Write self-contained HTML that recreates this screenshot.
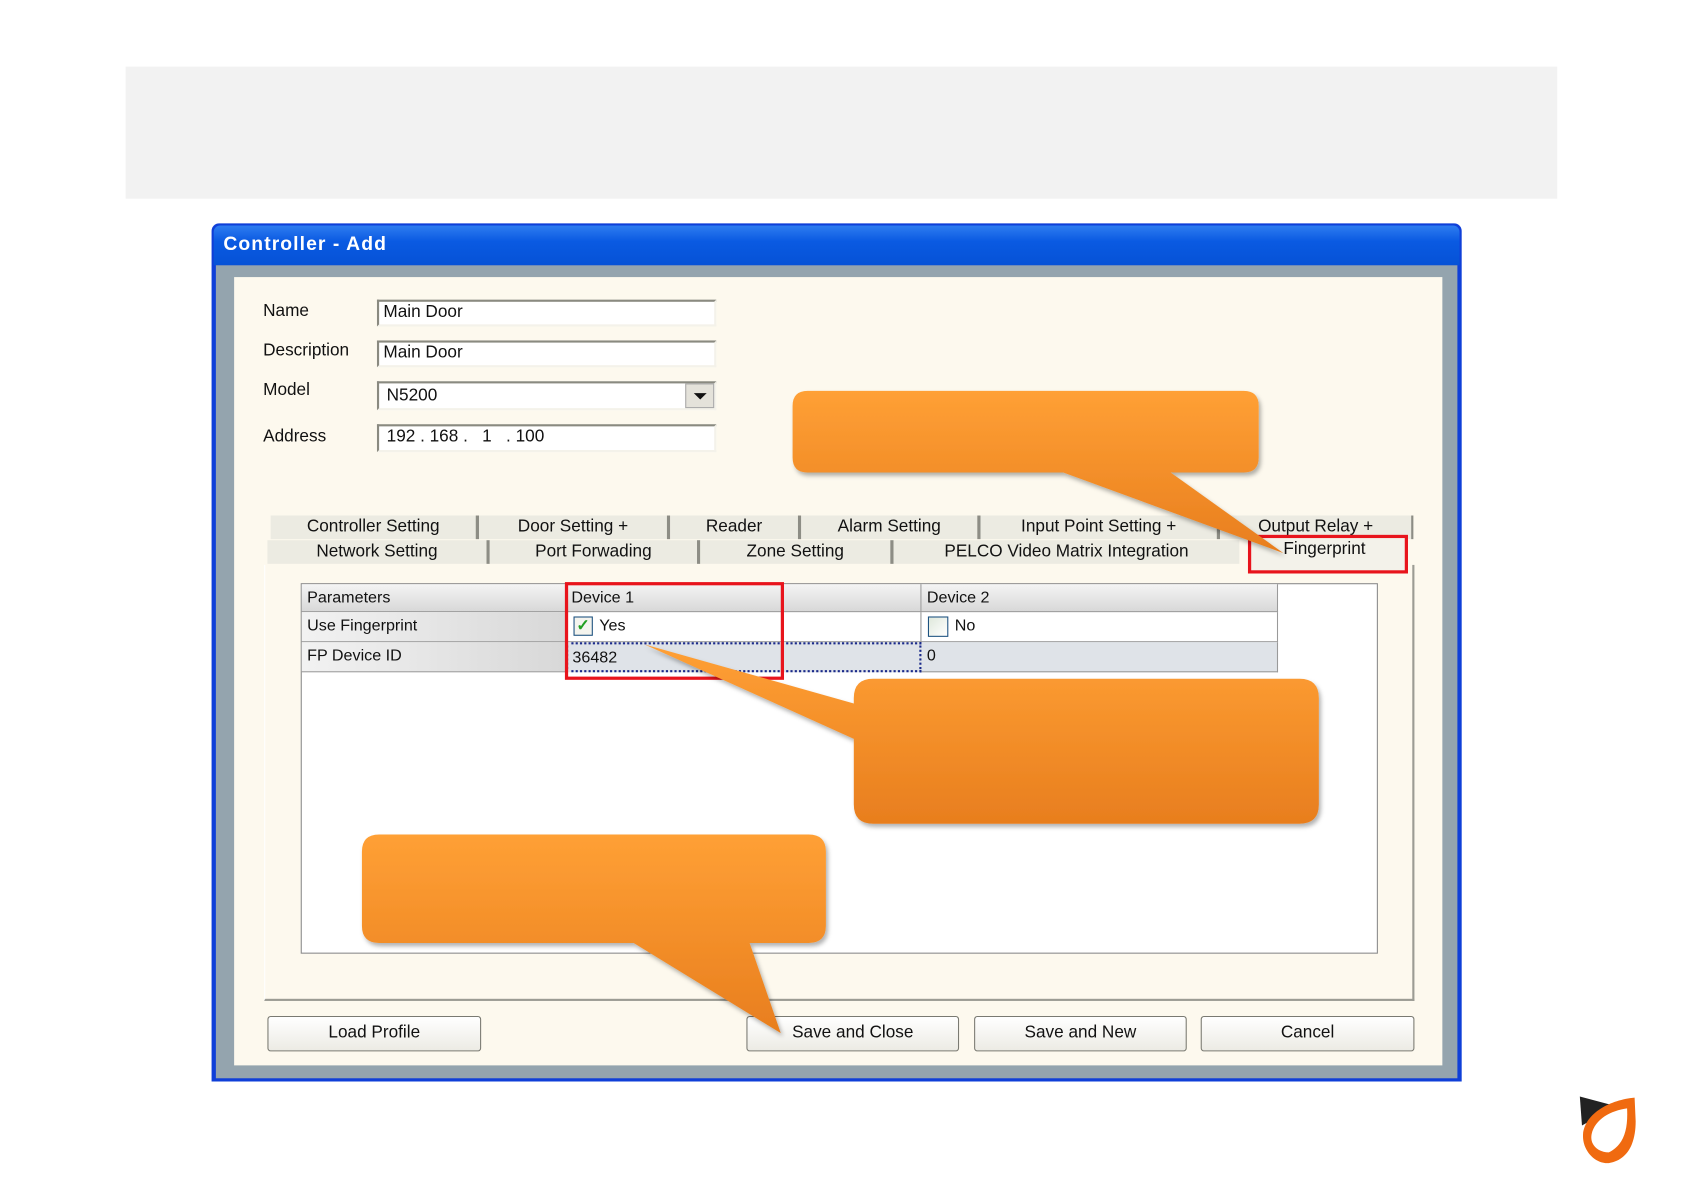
<!DOCTYPE html>
<html><head><meta charset="utf-8"><style>
html,body{margin:0;padding:0;width:1684px;height:1191px;overflow:hidden;background:#fff}
#w{position:absolute;left:0;top:0;width:1568px;height:1109px;transform:scale(1.07398);transform-origin:0 0;font-family:"Liberation Sans",sans-serif;font-size:16px;color:#111}
.a{position:absolute;box-sizing:border-box}
.t{position:absolute;white-space:nowrap}
.fld{position:absolute;box-sizing:border-box;background:#fff;border:2px solid;border-color:#8a8a80 #f4f2ea #f4f2ea #8a8a80;padding:1px 4px;font-size:16px}
.tab{position:absolute;height:22px;background:#ecebe2;border-right:3px solid #8d8d85;text-align:center;line-height:22px;font-size:16px}
.btn{position:absolute;height:31px;top:946px;border:1px solid #7a7a72;border-radius:3px;background:linear-gradient(#fff,#ecebe4);text-align:center;line-height:30px;font-size:16px}
.cell{position:absolute;box-sizing:border-box;padding-left:5px;line-height:26px;font-size:15px;border-right:1px solid #9a9a9a;border-bottom:1px solid #9a9a9a}
</style></head><body><div id="w">
<div class="a" style="left:117px;top:62px;width:1333px;height:123px;background:#f2f2f2"></div>
<!-- dialog -->
<div class="a" style="left:197px;top:208px;width:1164px;height:799px;background:#0f3fd8;border-radius:7px 7px 0 0"></div>
<div class="a" style="left:199px;top:210px;width:1160px;height:37px;background:linear-gradient(#2e7cf0,#0a5ae2 40%,#0652d6);border-radius:6px 6px 0 0"></div>
<div class="t" style="left:208px;top:217px;color:#fff;font-weight:bold;font-size:18px;letter-spacing:1px">Controller - Add</div>
<div class="a" style="left:201px;top:247px;width:1156px;height:757px;background:#94a4ae"></div>
<div class="a" style="left:218px;top:258px;width:1125px;height:734px;background:#fdf9ee"></div>
<div class="t" style="left:245px;top:281px">Name</div>
<div class="t" style="left:245px;top:318px">Description</div>
<div class="t" style="left:245px;top:355px">Model</div>
<div class="t" style="left:245px;top:398px">Address</div>
<div class="fld" style="left:351px;top:279px;width:316px;height:25px">Main Door</div>
<div class="fld" style="left:351px;top:317px;width:316px;height:25px">Main Door</div>
<div class="fld" style="left:351px;top:355px;width:316px;height:27px;padding-left:7px;padding-top:3px">N5200</div>
<div class="a" style="left:638px;top:357px;width:27px;height:23px;background:#e4e2da;border:1px solid #aaa"></div>
<div class="a" style="left:646px;top:366px;width:0;height:0;border-left:6px solid transparent;border-right:6px solid transparent;border-top:6px solid #111"></div>
<div class="fld" style="left:351px;top:395px;width:316px;height:26px;padding-left:7px">192 . 168 .&nbsp;&nbsp; 1 &nbsp; . 100</div>
<!-- tabs -->
<div class="tab" style="left:252px;top:480px;width:191px">Controller Setting</div>
<div class="tab" style="left:446px;top:480px;width:175px">Door Setting +</div>
<div class="tab" style="left:624px;top:480px;width:119px">Reader</div>
<div class="tab" style="left:746px;top:480px;width:164px">Alarm Setting</div>
<div class="tab" style="left:913px;top:480px;width:220px">Input Point Setting +</div>
<div class="tab" style="left:1136px;top:480px;width:178px;border-right:2px solid #8d8d85">Output Relay +</div>
<div class="tab" style="left:249px;top:503px;width:204px">Network Setting</div>
<div class="tab" style="left:456px;top:503px;width:193px">Port Forwading</div>
<div class="tab" style="left:652px;top:503px;width:177px">Zone Setting</div>
<div class="tab" style="left:832px;top:503px;width:322px;border-right:none">PELCO Video Matrix Integration</div>
<div class="a" style="left:1163px;top:499px;width:147px;height:34px;background:#f3f2ea"></div>
<div class="t" style="left:1195px;top:503px;font-size:16px">Fingerprint</div>
<div class="a" style="left:246px;top:526px;width:1071px;height:406px;border:2px solid #9c9c94;border-top:none;border-left:1px solid #fff"></div>
<!-- grid -->
<div class="a" style="left:280px;top:543px;width:1003px;height:345px;background:#fff;border:1px solid #8a8a8a"></div>
<div class="cell" style="left:281px;top:544px;width:246px;height:26px;background:linear-gradient(#f4f4f4,#d8d8d8)">Parameters</div>
<div class="cell" style="left:527px;top:544px;width:331px;height:26px;background:linear-gradient(#f4f4f4,#d8d8d8)">Device 1</div>
<div class="cell" style="left:858px;top:544px;width:332px;height:26px;background:linear-gradient(#f4f4f4,#d8d8d8)">Device 2</div>
<div class="cell" style="left:281px;top:570px;width:246px;height:28px;background:linear-gradient(90deg,#f2f2f2,#d8d8d8)">Use Fingerprint</div>
<div class="cell" style="left:527px;top:570px;width:331px;height:28px;padding-left:31px">Yes</div>
<div class="a" style="left:534px;top:574px;width:18px;height:18px;border:1px solid #1c5180;background:#f4f4ee;color:#22a022;font-size:15px;line-height:16px;text-align:center;font-weight:bold">✓</div>
<div class="cell" style="left:858px;top:570px;width:332px;height:28px;padding-left:31px">No</div>
<div class="a" style="left:864px;top:574px;width:19px;height:19px;border:1px solid #1c5180;background:linear-gradient(135deg,#dfe8dc,#fff)"></div>
<div class="cell" style="left:281px;top:598px;width:246px;height:28px;background:linear-gradient(90deg,#f2f2f2,#d8d8d8)">FP Device ID</div>
<div class="cell" style="left:527px;top:598px;width:331px;height:28px;background:#dfe3e8;border:2px dotted #1a2a8a;padding-left:4px">36482</div>
<div class="cell" style="left:858px;top:598px;width:332px;height:28px;background:#dfe3e8">0</div>
<!-- buttons -->
<div class="btn" style="left:249px;width:197px">Load Profile</div>
<div class="btn" style="left:695px;width:196px">Save and Close</div>
<div class="btn" style="left:907px;width:196px">Save and New</div>
<div class="btn" style="left:1118px;width:197px">Cancel</div>
<!-- red boxes -->
<div class="a" style="left:1162px;top:498px;width:149px;height:36px;border:3px solid #e8141c"></div>
<div class="a" style="left:526px;top:542px;width:204px;height:91px;border:3px solid #e8141c"></div>
<!-- callouts -->
<svg class="a" style="left:0;top:0" width="1568" height="1109">
<defs><linearGradient id="g" x1="0" y1="0" x2="0" y2="1"><stop offset="0" stop-color="#ffa035"/><stop offset="1" stop-color="#e87e1e"/></linearGradient>
<filter id="s"><feDropShadow dx="2" dy="3" stdDeviation="2" flood-color="#000" flood-opacity=".3"/></filter></defs>
<g fill="url(#g)" filter="url(#s)">
<path d="M752 364H1158Q1172 364 1172 378V426Q1172 440 1158 440H1090L1195 515L990 440H752Q738 440 738 426V378Q738 364 752 364Z"/>
<path d="M813 632H1210Q1228 632 1228 650V749Q1228 767 1210 767H813Q795 767 795 749V688L600 600L795 655V650Q795 632 813 632Z"/>
<path d="M353 777H753Q769 777 769 793V862Q769 878 753 878H698L727 962L590 878H353Q337 878 337 862V793Q337 777 353 777Z"/>
</g>
<!-- logo -->
<path d="M1471 1021L1505 1030L1473 1048Z" fill="#222"/>
<path d="M1522 1022C1500 1024 1476 1036 1474 1056C1473 1072 1486 1084 1498 1083C1516 1080 1523 1064 1523 1044ZM1515 1032C1516 1052 1512 1066 1498 1073C1488 1073 1480 1066 1482 1056C1485 1042 1500 1034 1515 1032Z" fill="#f06a10" fill-rule="evenodd"/>
</svg>
</div></body></html>
